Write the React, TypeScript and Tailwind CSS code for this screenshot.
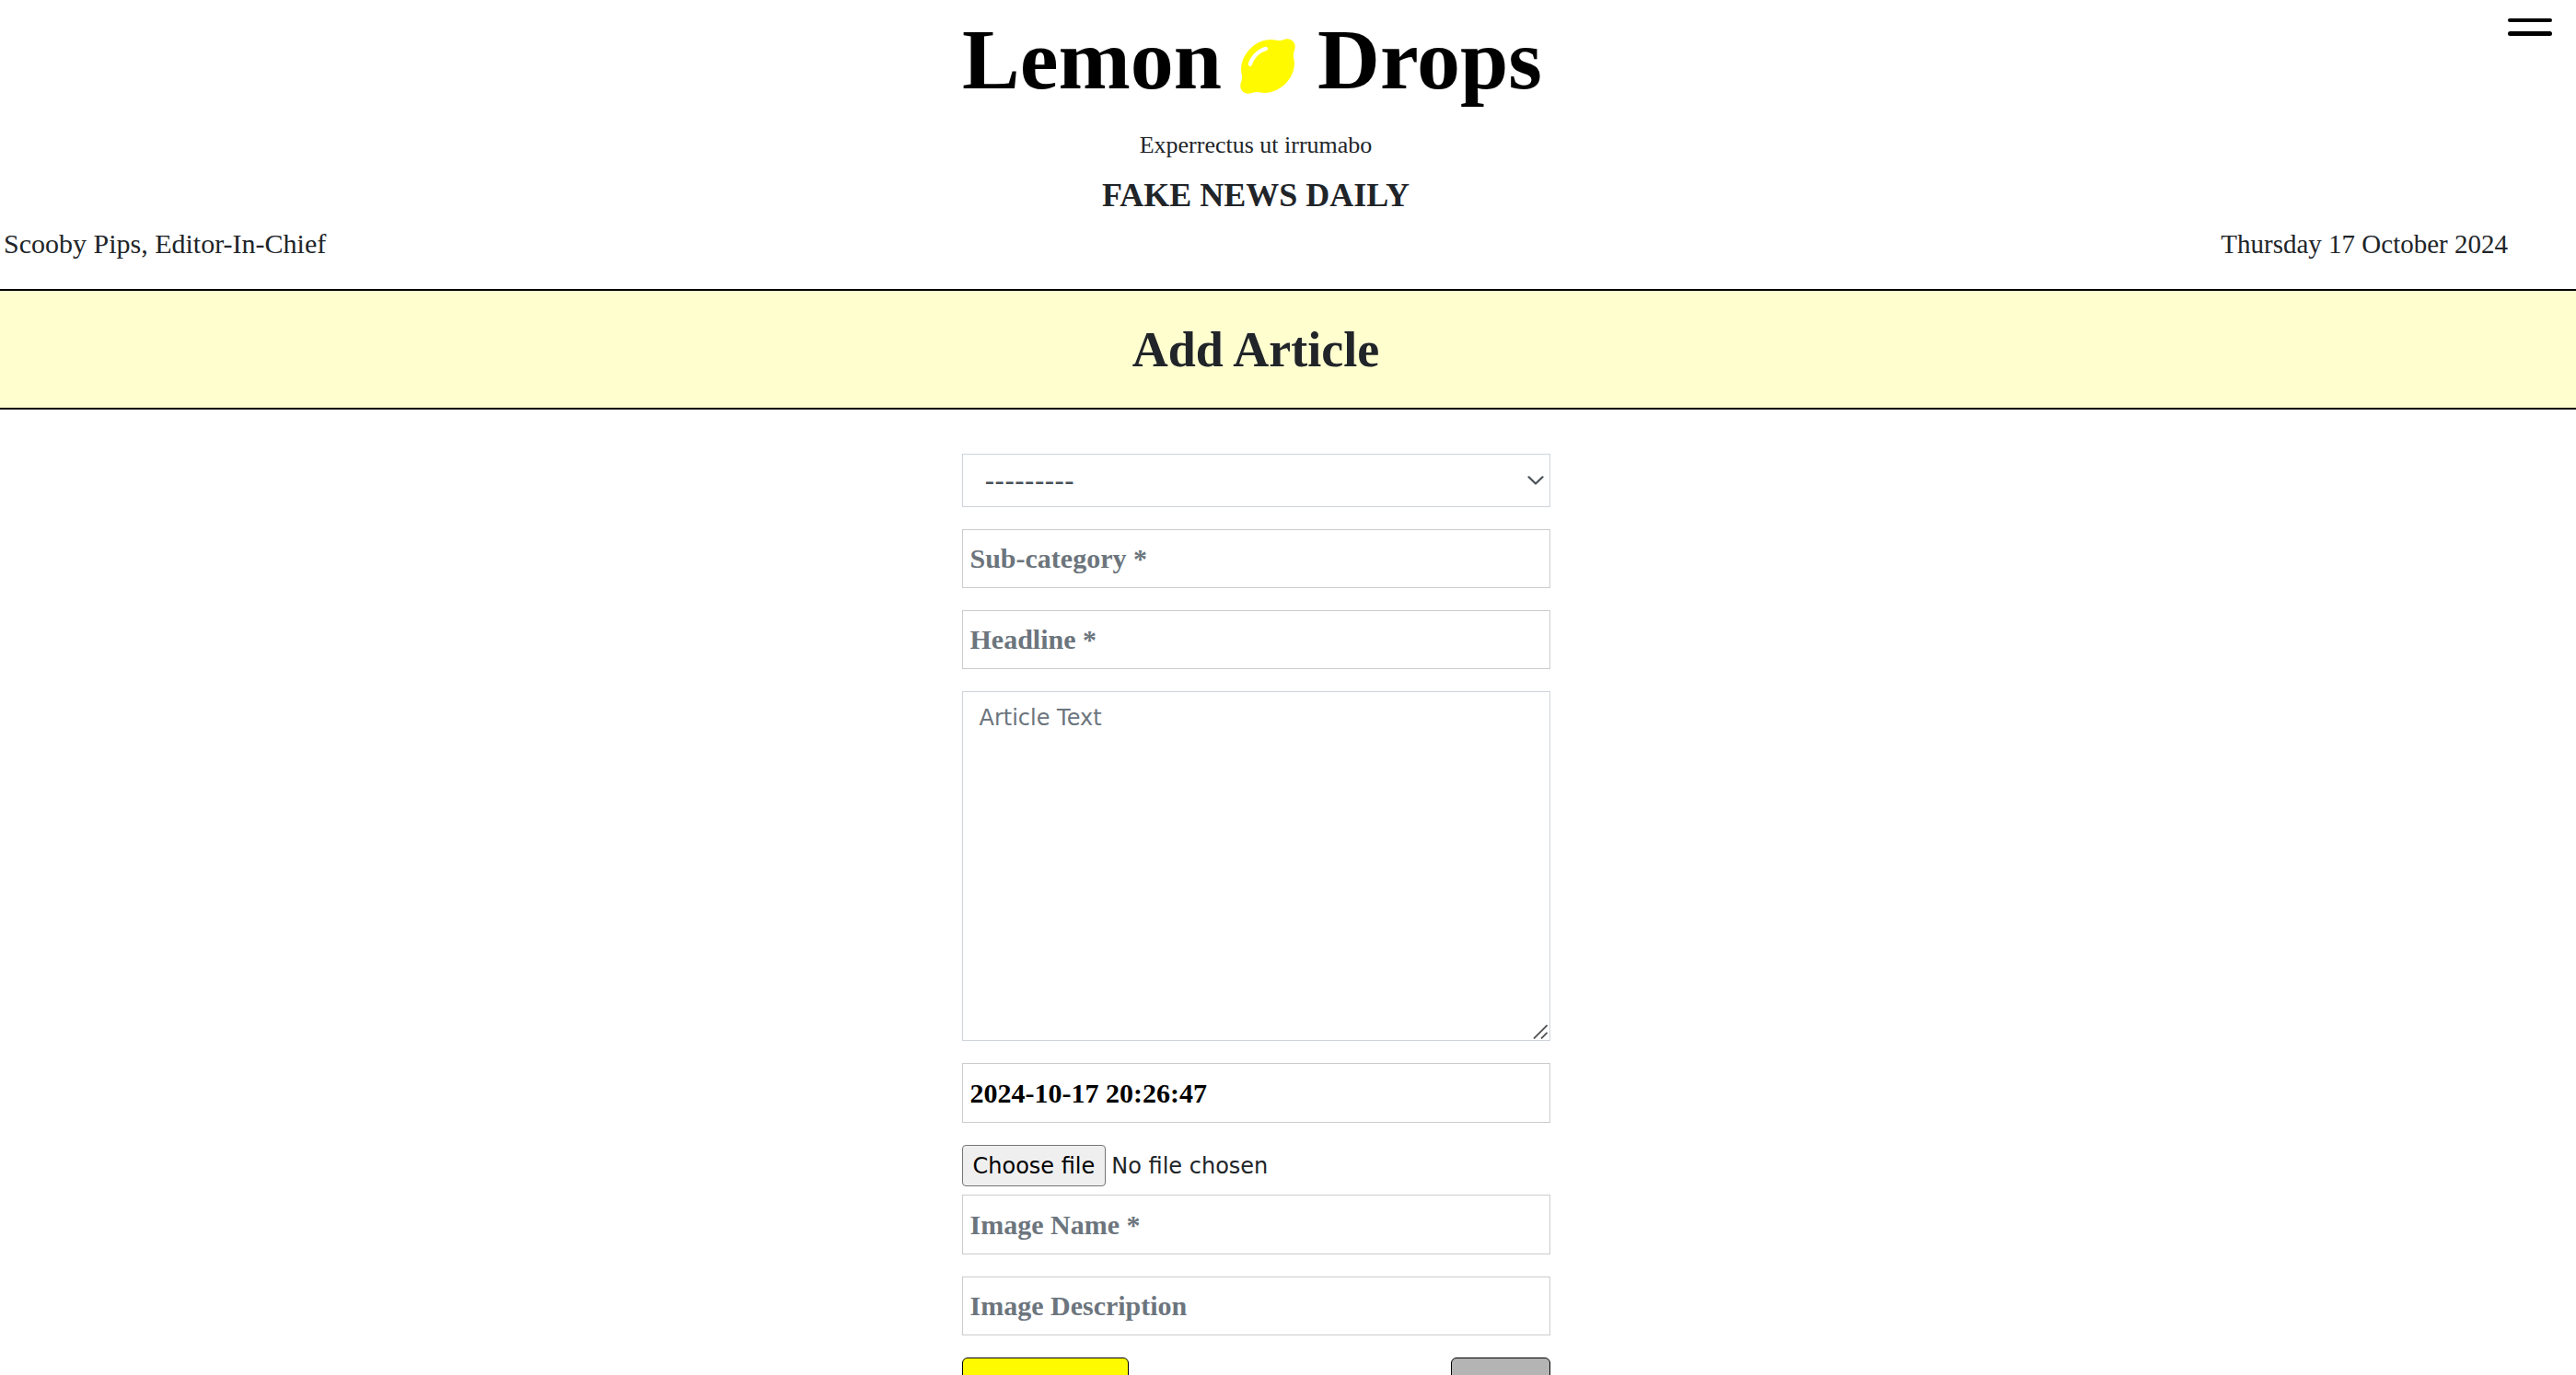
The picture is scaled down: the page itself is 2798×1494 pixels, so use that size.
import React from "react";
import { FaLemon } from "react-icons/fa6";

const fieldClass =
  "block w-full border border-[#cccccc] bg-white pl-2 pr-2 text-[30px] font-bold text-black placeholder:text-[#6c757d] placeholder:opacity-100";

function TextField(props: {
  label: string;
  placeholder?: string;
  defaultValue?: string;
  className: string;
}) {
  return (
    <input
      type="text"
      aria-label={props.label}
      placeholder={props.placeholder}
      defaultValue={props.defaultValue}
      className={`${fieldClass} ${props.className}`}
    />
  );
}

function Masthead() {
  return (
    <header className="relative pb-6">
      <div className="mr-[70px] flex flex-col">
        <a
          href="#home"
          className="flex items-center justify-center pr-2 text-[94px] leading-[128px] font-bold text-black"
        >
          <span>Lemon</span>
          <FaLemon className="mr-6 ml-5 mt-4 h-[68px] w-[60px] text-[#fffa00]" aria-hidden="true" />
          <span>Drops</span>
        </a>
        <p className="mt-2 text-center text-[26px] leading-[44px]">Experrectus ut irrumabo</p>
        <h2 className="mt-2 text-center text-[36px] leading-[48px] font-bold">FAKE NEWS DAILY</h2>
        <div className="mt-1 flex justify-between px-1 leading-[50px]">
          <p className="text-[30px]">Scooby Pips, Editor-In-Chief</p>
          <p className="text-[29px]">Thursday 17 October 2024</p>
        </div>
      </div>
      <button
        type="button"
        aria-label="Menu"
        className="absolute top-5 right-[26px] flex w-12 flex-col gap-[10px]"
      >
        <span className="h-1 w-full rounded-full bg-black" />
        <span className="h-[5px] w-full rounded-full bg-black" />
      </button>
    </header>
  );
}

function ArticleForm() {
  return (
    <form className="mx-auto mt-12 w-[639px] max-w-full" onSubmit={(e) => e.preventDefault()}>
      <div className="relative">
        <select
          aria-label="Category"
          className="block h-[58px] w-full appearance-none border border-[#ced4da] bg-white pl-6 font-['DejaVu_Sans',sans-serif] text-[30px] text-[#495057]"
        >
          <option>---------</option>
        </select>
        <svg
          className="pointer-events-none absolute top-6 right-[7px] h-[10px] w-[18px]"
          viewBox="0 0 18 10"
          fill="none"
          stroke="#495057"
          strokeWidth="2.2"
          strokeLinecap="round"
          strokeLinejoin="round"
          aria-hidden="true"
        >
          <path d="M1.500 1.300l7.500 7.200 7.500-7.200" />
        </svg>
      </div>
      <TextField label="Sub-category" placeholder="Sub-category *" className="mt-6 h-16" />
      <TextField label="Headline" placeholder="Headline *" className="mt-6 h-16" />
      <div className="relative mt-6">
        <textarea
          aria-label="Article Text"
          placeholder="Article Text"
          className="block h-[380px] w-full resize-none border border-[#ced4da] bg-white px-[18px] py-[10px] font-['DejaVu_Sans',sans-serif] text-2xl leading-9 text-[#495057] placeholder:text-[#6c757d] placeholder:opacity-100"
        />
        <svg
          className="pointer-events-none absolute right-[3px] bottom-[2px] h-4 w-4"
          viewBox="0 0 16 16"
          stroke="#555555"
          strokeWidth="1.8"
          aria-hidden="true"
        >
          <path d="M1 15.500L15.500 1M9 15.500L15.500 9" />
        </svg>
      </div>
      <TextField label="Publish date" defaultValue="2024-10-17 20:26:47" className="mt-6 h-[65px]" />
      <label className="mt-6 flex w-fit cursor-pointer items-center gap-[6px] font-['DejaVu_Sans',sans-serif] text-2xl">
        <input type="file" className="sr-only" />
        <span className="flex h-[45px] items-center rounded border border-[#767676] bg-[#efefef] px-[11px] text-black">
          Choose file
        </span>
        <span>No file chosen</span>
      </label>
      <TextField label="Image Name" placeholder="Image Name *" className="mt-[9px] h-[65px]" />
      <TextField label="Image Description" placeholder="Image Description" className="mt-6 h-16" />
      <div className="mt-6 flex justify-between">
        <button
          type="submit"
          aria-label="Submit"
          className="h-16 w-[181px] rounded-md border border-black bg-[#fffa00]"
        />
        <button
          type="button"
          aria-label="Back"
          className="h-16 w-[108px] rounded-md border border-black bg-[#b4b4b4]"
        />
      </div>
    </form>
  );
}

export default function App() {
  return (
    <div className="h-screen overflow-hidden bg-white font-['Liberation_Serif',serif] text-[#212529]">
      <Masthead />
      <div className="border-y-2 border-black bg-[#fffecf] pt-[29px] pr-[70px] pb-7">
        <h1 className="text-center text-[54px] leading-[70px] font-bold">Add Article</h1>
      </div>
      <main className="mr-[70px]">
        <ArticleForm />
      </main>
    </div>
  );
}
